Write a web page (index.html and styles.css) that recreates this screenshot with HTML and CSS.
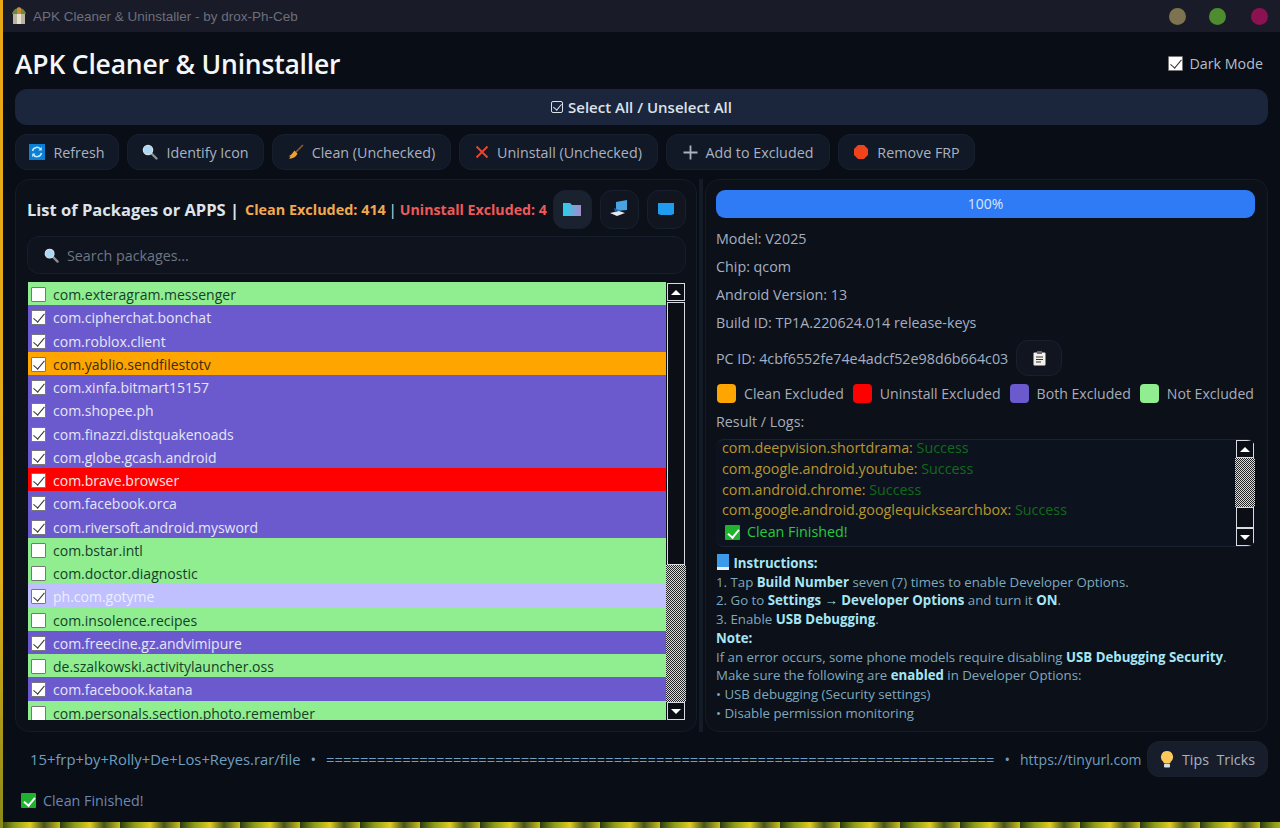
FILE: index.html
```html
<!DOCTYPE html>
<html lang="en">

<head>
    <meta charset="UTF-8">
    <title>APK Cleaner &amp; Uninstaller</title>
    <link rel="stylesheet" href="styles.css">
</head>

<body>
    <div class="window">
        <div class="titlebar">
            <svg class="app-icon" width="16" height="18" viewBox="0 0 16 18">
                <path d="M2 7h12v10H2z" fill="#b9b3a0" />
                <path d="M6 7h4v10H6z" fill="#e6e2d2" />
                <path d="M1 7c1-4 4-6 7-6s6 2 7 6z" fill="#6d8a3c" />
                <path d="M6 1l2-1 2 1v6H6z" fill="#c98a3a" />
            </svg>
            <span class="title-text">APK Cleaner &amp; Uninstaller - by drox-Ph-Ceb</span>
            <div class="dots">
                <span class="dot dot-yellow"></span>
                <span class="dot dot-green"></span>
                <span class="dot dot-red"></span>
            </div>
        </div>

        <div class="content">
            <div class="header">
                <h1>APK Cleaner &amp; Uninstaller</h1>
                <label class="dark-toggle"><span class="check check-on"></span>Dark Mode</label>
            </div>

            <div class="select-all"><span class="mini-box"></span>Select All / Unselect All</div>

            <div class="toolbar">
                <button class="btn btn-refresh">
                    <svg width="16" height="16" viewBox="0 0 16 16">
                        <rect width="16" height="16" fill="#0b7fd6" />
                        <path d="M3.5 7a4.6 4.6 0 0 1 8.4-1.5M12.5 9a4.6 4.6 0 0 1-8.4 1.5" fill="none" stroke="#bfe6ff" stroke-width="1.6" />
                        <path d="M12.8 2.8v3.6H9.4zM3.2 13.2V9.600h3.400z" fill="#bfe6ff" />
                    </svg>
                    Refresh
                </button>
                <button class="btn btn-identify">
                    <svg width="16" height="16" viewBox="0 0 16 16">
                        <path d="M9.500 9.500l5 5" stroke="#8a8f98" stroke-width="2.400" stroke-linecap="round" />
                        <circle cx="6" cy="6" r="4.600" fill="#a9d8f5" stroke="#d5dde4" stroke-width="1.400" />
                    </svg>
                    Identify Icon
                </button>
                <button class="btn btn-clean">
                    <svg width="16" height="16" viewBox="0 0 16 16">
                        <path d="M15 1L8 8" stroke="#8a5a32" stroke-width="1.600" />
                        <path d="M6.500 6.500l3 3c-1 3-4 5-8.500 5.500 1-1 .5-1 1.500-3-1 .5-1.500.5-2 .5 2-1 4-3 6-6z" fill="#f0a030" />
                    </svg>
                    Clean (Unchecked)
                </button>
                <button class="btn btn-uninstall">
                    <svg width="14" height="14" viewBox="0 0 14 14">
                        <path d="M1.500 1.500l11 11M12.500 1.500l-11 11" stroke="#e8452c" stroke-width="2" />
                    </svg>
                    Uninstall (Unchecked)
                </button>
                <button class="btn btn-add">
                    <svg width="15" height="15" viewBox="0 0 15 15">
                        <path d="M7.500 .5v14M.5 7.500h14" stroke="#aab2bf" stroke-width="1.800" />
                    </svg>
                    Add to Excluded
                </button>
                <button class="btn btn-frp">
                    <svg width="16" height="16" viewBox="0 0 16 16">
                        <path d="M5 1h6l4 4v6l-4 4H5l-4-4V5z" fill="#f0431c" />
                    </svg>
                    Remove FRP
                </button>
            </div>

            <div class="panels">
                <section class="panel panel-left">
                    <div class="list-head">
                        <h2>List of Packages or APPS |</h2>
                        <span class="count-clean">Clean Excluded: 414</span>
                        <span class="count-sep">|</span>
                        <span class="count-uninstall">Uninstall Excluded: 4</span>
                        <div class="view-btns">
                            <button class="icon-btn icon-btn-active">
                                <svg width="20" height="16" viewBox="0 0 20 16">
                                    <defs>
                                        <linearGradient id="folderFill" x1="0" x2="1" y1="0" y2="0">
                                            <stop offset="0" stop-color="#22d3ee" />
                                            <stop offset="1" stop-color="#a78bca" />
                                        </linearGradient>
                                    </defs>
                                    <path d="M1 2h7l2 2h9v11H1z" fill="url(#folderFill)" />
                                </svg>
                            </button>
                            <button class="icon-btn">
                                <svg width="20" height="18" viewBox="0 0 20 18">
                                    <path d="M7 2l11-2v10L7 11z" fill="#4aa3e0" />
                                    <path d="M1 13l9-2 6 2-8 3z" fill="#e6e8ec" />
                                    <path d="M5 8l5 2-4 2z" fill="#2563a8" />
                                </svg>
                            </button>
                            <button class="icon-btn">
                                <svg width="18" height="14" viewBox="0 0 18 14">
                                    <path d="M1 1h16v11l-3 1H4l-3-1z" fill="#1f9cf0" />
                                </svg>
                            </button>
                        </div>
                    </div>

                    <div class="search">
                        <svg width="15" height="15" viewBox="0 0 16 16">
                            <path d="M9.500 9.500l5 5" stroke="#8a8f98" stroke-width="2.400" stroke-linecap="round" />
                            <circle cx="6" cy="6" r="4.600" fill="#a9d8f5" stroke="#d5dde4" stroke-width="1.400" />
                        </svg>
                        <span>Search packages...</span>
                    </div>

                    <div class="pkg-box">
                        <div class="pkg-list">
                            <div class="row row-green"><span class="check"></span>com.exteragram.messenger</div>
                            <div class="row row-purple"><span class="check check-on"></span>com.cipherchat.bonchat</div>
                            <div class="row row-purple"><span class="check check-on"></span>com.roblox.client</div>
                            <div class="row row-orange"><span class="check check-on"></span>com.yablio.sendfilestotv</div>
                            <div class="row row-purple"><span class="check check-on"></span>com.xinfa.bitmart15157</div>
                            <div class="row row-purple"><span class="check check-on"></span>com.shopee.ph</div>
                            <div class="row row-purple"><span class="check check-on"></span>com.finazzi.distquakenoads</div>
                            <div class="row row-purple"><span class="check check-on"></span>com.globe.gcash.android</div>
                            <div class="row row-red"><span class="check check-on"></span>com.brave.browser</div>
                            <div class="row row-purple"><span class="check check-on"></span>com.facebook.orca</div>
                            <div class="row row-purple"><span class="check check-on"></span>com.riversoft.android.mysword</div>
                            <div class="row row-green"><span class="check"></span>com.bstar.intl</div>
                            <div class="row row-green"><span class="check"></span>com.doctor.diagnostic</div>
                            <div class="row row-lilac"><span class="check check-on"></span>ph.com.gotyme</div>
                            <div class="row row-green"><span class="check"></span>com.insolence.recipes</div>
                            <div class="row row-purple"><span class="check check-on"></span>com.freecine.gz.andvimipure</div>
                            <div class="row row-green"><span class="check"></span>de.szalkowski.activitylauncher.oss</div>
                            <div class="row row-purple"><span class="check check-on"></span>com.facebook.katana</div>
                            <div class="row row-green"><span class="check"></span>com.personals.section.photo.remember</div>
                        </div>
                        <div class="scrollbar">
                            <div class="sb-btn"><span class="arrow-up"></span></div>
                            <div class="sb-thumb thumb-list"></div>
                            <div class="sb-track"></div>
                            <div class="sb-btn"><span class="arrow-down"></span></div>
                        </div>
                    </div>
                </section>

                <div class="splitter"></div>

                <section class="panel panel-right">
                    <div class="progress">100%</div>
                    <div class="info">Model: V2025</div>
                    <div class="info">Chip: qcom</div>
                    <div class="info">Android Version: 13</div>
                    <div class="info">Build ID: TP1A.220624.014 release-keys</div>
                    <div class="pc-row">
                        <span>PC ID: 4cbf6552fe74e4adcf52e98d6b664c03</span>
                        <button class="copy-btn">
                            <svg width="13" height="15" viewBox="0 0 13 15">
                                <rect x=".5" y="1.500" width="12" height="13" rx="1" fill="#f2f0e8" />
                                <rect x="4" y="0" width="5" height="3" fill="#6b6b6b" />
                                <path d="M3 6h7M3 8.500h7M3 11h5" stroke="#333" stroke-width="1.100" />
                            </svg>
                        </button>
                    </div>
                    <div class="legend">
                        <span class="swatch swatch-orange"></span><span class="legend-text">Clean Excluded</span>
                        <span class="swatch swatch-red"></span><span class="legend-text">Uninstall Excluded</span>
                        <span class="swatch swatch-purple"></span><span class="legend-text">Both Excluded</span>
                        <span class="swatch swatch-green"></span><span class="legend-text">Not Excluded</span>
                    </div>
                    <div class="logs-label">Result / Logs:</div>
                    <div class="logs">
                        <div class="log-lines">
                            <div><span class="pkg">com.deepvision.shortdrama:</span> <span class="ok">Success</span></div>
                            <div><span class="pkg">com.google.android.youtube:</span> <span class="ok">Success</span></div>
                            <div><span class="pkg">com.android.chrome:</span> <span class="ok">Success</span></div>
                            <div><span class="pkg">com.google.android.googlequicksearchbox:</span> <span class="ok">Success</span></div>
                            <div class="log-done"><span class="green-tick"></span>Clean Finished!</div>
                        </div>
                        <div class="scrollbar scrollbar-logs">
                            <div class="sb-btn"><span class="arrow-up"></span></div>
                            <div class="sb-track track-logs"></div>
                            <div class="sb-thumb thumb-logs"></div>
                            <div class="sb-btn"><span class="arrow-down"></span></div>
                        </div>
                    </div>
                    <div class="instructions">
                        <div><svg class="book" width="14" height="16" viewBox="0 0 14 16">
                                <rect x="1" y="0" width="12" height="13" fill="#3b9be8" />
                                <rect x="1" y="13" width="12" height="3" fill="#e8f0f8" />
                            </svg> <b>Instructions:</b></div>
                        <div>1. Tap <b>Build Number</b> seven (7) times to enable Developer Options.</div>
                        <div>2. Go to <b>Settings → Developer Options</b> and turn it <b>ON</b>.</div>
                        <div>3. Enable <b>USB Debugging</b>.</div>
                        <div><b>Note:</b></div>
                        <div>If an error occurs, some phone models require disabling <b>USB Debugging Security</b>.</div>
                        <div>Make sure the following are <b>enabled</b> in Developer Options:</div>
                        <div>• USB debugging (Security settings)</div>
                        <div>• Disable permission monitoring</div>
                    </div>
                </section>
            </div>

            <div class="footer">
                <div class="marquee">15+frp+by+Rolly+De+Los+Reyes.rar/file<span class="marquee-sep">•</span>===============================================================================<span class="marquee-sep">•</span><span class="marquee-link">https://tinyurl.com</span></div>
                <button class="btn btn-tips">
                    <svg width="14" height="17" viewBox="0 0 14 17">
                        <path d="M7 0a6 6 0 0 1 3.500 10.900V12h-7v-1.100A6 6 0 0 1 7 0z" fill="#fcc95a" />
                        <rect x="4" y="12.500" width="6" height="4" rx="1" fill="#d8dde2" />
                    </svg>
                    Tips&nbsp; Tricks
                </button>
            </div>

            <div class="status"><span class="green-tick"></span>Clean Finished!</div>
        </div>
    </div>
</body>

</html>
```
FILE: styles.css
```css
* {
    box-sizing: border-box;
}

body {
    margin: 0;
    width: 1280px;
    height: 828px;
    overflow: hidden;
    font-family: "Open Sans", "Noto Sans", sans-serif;
    background-color: #d8b818;
    background-image:
        linear-gradient(#e8a814, #e0b018 70%, #8a8a18),
        repeating-linear-gradient(90deg, #2c3a10 0, #8a9a18 14px, #e0cc20 30px, #46541a 44px, #c8c020 60px);
    background-size: 3px 100%, 100% 100%;
    background-repeat: no-repeat;
}

button {
    font-family: inherit;
}

.window {
    margin-left: 3px;
    height: 822px;
    background-color: #090d15;
    display: flex;
    flex-direction: column;
}

.titlebar {
    height: 32px;
    flex: none;
    background-color: #1a1b29;
    display: flex;
    align-items: center;
    padding-left: 8px;
    color: #6a6f7a;
    font-family: "Liberation Sans", Arial, sans-serif;
    font-size: 13.500px;
}

.app-icon {
    margin-right: 6px;
}

.dots {
    margin-left: auto;
    display: flex;
    gap: 23px;
    padding-right: 12px;
}

.dot {
    width: 17px;
    height: 17px;
    border-radius: 50%;
}

.dot-yellow {
    background-color: #7d7350;
}

.dot-green {
    background-color: #4f8c2f;
    margin-right: 2px;
}

.dot-red {
    background-color: #8a1250;
}

.content {
    flex: 1;
    padding: 0 12px;
    display: flex;
    flex-direction: column;
}

.header {
    height: 57px;
    display: flex;
    align-items: center;
    justify-content: space-between;
    padding-right: 2px;
}

h1 {
    margin: 0;
    color: #f4f6f8;
    font-size: 26.500px;
    font-weight: 600;
    padding-top: 7px;
    letter-spacing: -0.2px;
}

.dark-toggle {
    display: flex;
    align-items: center;
    gap: 6px;
    color: #b6bdc9;
    font-size: 14.300px;
    padding-top: 5px;
    padding-right: 3px;
}

.select-all {
    height: 36px;
    flex: none;
    border-radius: 12px;
    background-color: #1b263d;
    color: #dce2ea;
    font-size: 15px;
    font-weight: 600;
    display: flex;
    align-items: center;
    justify-content: center;
    gap: 5px;
}

.mini-box {
    width: 12px;
    height: 12px;
    border: 1.500px solid #dce2ea;
    border-radius: 2px;
    position: relative;
}

.mini-box::after {
    content: "";
    position: absolute;
    left: 3px;
    top: 0;
    width: 4px;
    height: 7px;
    border-right: 1.500px solid #dce2ea;
    border-bottom: 1.500px solid #dce2ea;
    transform: rotate(40deg);
}

.toolbar {
    display: flex;
    gap: 8px;
    margin-top: 9px;
    flex: none;
}

.btn {
    height: 36px;
    border: 1px solid #182030;
    border-radius: 12px;
    background-color: #111826;
    color: #a9b2c0;
    font-size: 14.300px;
    display: flex;
    align-items: center;
    justify-content: center;
    gap: 8px;
    padding: 0;
}

.btn-refresh {
    width: 104px;
}

.btn-identify {
    width: 137px;
}

.btn-clean {
    width: 179px;
}

.btn-uninstall {
    width: 199px;
}

.btn-add {
    width: 164px;
}

.btn-frp {
    width: 137px;
}

.panels {
    display: grid;
    grid-template-columns: 682px 8px 563px;
    height: 553px;
    margin-top: 9px;
    flex: none;
}

.panel {
    border: 1px solid #141b29;
    border-radius: 14px;
    background-color: #0c1019;
    padding: 10px 10px 10px 11px;
}

.splitter {
    margin: 0 2px;
    background-color: #141a26;
}

.list-head {
    display: flex;
    align-items: center;
    height: 38px;
    font-size: 14.400px;
    font-weight: 700;
    white-space: nowrap;
}

h2 {
    margin: 0 6px 0 0;
    color: #dfe4ea;
    font-size: 16.500px;
    font-weight: 700;
}

.count-clean {
    color: #f0a94e;
}

.count-sep {
    color: #dfe4ea;
    margin: 0 3px;
    font-weight: 400;
}

.count-uninstall {
    color: #ee5a5a;
    font-size: 14.200px;
}

.view-btns {
    margin-left: auto;
    display: flex;
    gap: 7.500px;
}

.icon-btn {
    width: 39.500px;
    height: 39px;
    border: 1px solid #182030;
    border-radius: 12px;
    background-color: #10151f;
    display: flex;
    align-items: center;
    justify-content: center;
    padding: 0;
}

.icon-btn-active {
    background-color: #1a2230;
}

.search {
    height: 38px;
    margin-top: 8px;
    border: 1px solid #161d2b;
    border-radius: 12px;
    background-color: #0e131d;
    display: flex;
    align-items: center;
    gap: 8px;
    padding-left: 16px;
    color: #6e7683;
    font-size: 14.300px;
}

.pkg-box {
    margin-top: 8px;
    height: 438px;
    padding-left: 1px;
    display: flex;
    justify-content: space-between;
}

.pkg-list {
    width: 638px;
    overflow: hidden;
}

.row {
    height: 23.250px;
    display: flex;
    align-items: center;
    gap: 7px;
    padding: 2px 0 0 3px;
    font-size: 14px;
    white-space: nowrap;
}

.row-green {
    background-color: #90ee90;
    color: #16402a;
}

.row-purple {
    background-color: #6a5acd;
    color: #e6e6f6;
}

.row-orange {
    background-color: #ffa500;
    color: #3a2c10;
}

.row-red {
    background-color: #ff0000;
    color: #f8e8e8;
}

.row-lilac {
    background-color: #c0c0ff;
    color: #eeeeff;
}

.check {
    width: 15px;
    height: 15px;
    flex: none;
    background-color: #fff;
    border: 1px solid #777;
    border-radius: 1px;
    display: inline-block;
    position: relative;
}

.check-on::after {
    content: "";
    position: absolute;
    left: 4px;
    top: 0;
    width: 5px;
    height: 10px;
    border-right: 1.500px solid #333;
    border-bottom: 1.500px solid #333;
    transform: rotate(40deg);
}

.scrollbar {
    width: 20px;
    display: flex;
    flex-direction: column;
    align-items: center;
    padding-top: 1px;
}

.sb-btn {
    width: 18px;
    height: 18px;
    flex: none;
    background-color: #0b0e15;
    border: 1px solid #d8dce2;
    display: flex;
    align-items: center;
    justify-content: center;
}

.arrow-up {
    border-left: 5px solid transparent;
    border-right: 5px solid transparent;
    border-bottom: 5px solid #fff;
}

.arrow-down {
    border-left: 5px solid transparent;
    border-right: 5px solid transparent;
    border-top: 5px solid #fff;
}

.sb-thumb {
    width: 18px;
    flex: none;
    background-color: #0b0e15;
    border: 1px solid #d8dce2;
}

.thumb-list {
    height: 263px;
    margin-top: 1px;
}

.thumb-logs {
    height: 21px;
}

.sb-track {
    width: 20px;
    flex: 1;
    background-image: conic-gradient(#222 25%, #ddd 0 50%, #222 0 75%, #ddd 0);
    background-size: 2px 2px;
}

.track-logs {
    flex: 1;
}

.panel-right {
    padding: 10px 12px 0 10px;
    color: #a3afc2;
    font-size: 14.300px;
}

.progress {
    height: 28px;
    margin-bottom: 6px;
    border-radius: 9px;
    background-color: #2f7bf6;
    color: #dbe6fb;
    font-size: 14px;
    text-align: center;
    line-height: 28px;
}

.info {
    height: 28px;
    display: flex;
    align-items: center;
}

.pc-row {
    height: 36px;
    margin-top: 4px;
    display: flex;
    align-items: center;
    gap: 8px;
}

.copy-btn {
    width: 46px;
    height: 36px;
    border: 1px solid #182030;
    border-radius: 12px;
    background-color: #10151f;
    display: flex;
    align-items: center;
    justify-content: center;
    padding: 0;
}

.legend {
    height: 28px;
    margin-top: 3px;
    padding-left: 1px;
    display: flex;
    align-items: center;
    color: #a6adb9;
    font-size: 14.100px;
}

.swatch {
    width: 19px;
    height: 19px;
    flex: none;
    border-radius: 4px;
    margin-right: 8px;
}

.legend-text {
    flex: none;
    margin-right: 9px;
    white-space: nowrap;
}

.legend-text:last-child {
    margin-right: 0;
}

.swatch-orange {
    background-color: #ffa500;
}

.swatch-red {
    background-color: #ff0000;
}

.swatch-purple {
    background-color: #6a5acd;
}

.swatch-green {
    background-color: #90ee90;
}

.logs-label {
    height: 28px;
    display: flex;
    align-items: center;
    color: #a6adb9;
}

.logs {
    height: 108px;
    margin-top: 4px;
    border-top: 1px solid #1a2230;
    border-bottom: 1px solid #1a2230;
    border-radius: 8px;
    background-color: #0d131e;
    display: flex;
    justify-content: space-between;
    overflow: hidden;
    padding-left: 6px;
}

.log-lines {
    margin-top: -2px;
    line-height: 20.800px;
    white-space: nowrap;
}

.pkg {
    color: #b8972e;
}

.ok {
    color: #126a1c;
}

.log-done {
    color: #27c93f;
    display: flex;
    align-items: center;
    gap: 7px;
    padding: 1px 0 0 3px;
}

.green-tick {
    width: 15px;
    height: 15px;
    flex: none;
    background-color: #1eb32e;
    border-radius: 1px;
    position: relative;
}

.green-tick::after {
    content: "";
    position: absolute;
    left: 5px;
    top: 2px;
    width: 5px;
    height: 9px;
    border-right: 2px solid #fff;
    border-bottom: 2px solid #fff;
    transform: rotate(40deg);
}

.scrollbar-logs {
    padding-top: 0;
}

.instructions {
    margin-top: 7px;
    font-size: 13.250px;
    line-height: 18.700px;
    color: #7fa8bc;
    white-space: nowrap;
}

.instructions b {
    color: #a5e6f5;
    font-weight: 700;
}

.book {
    vertical-align: -2px;
}

.footer {
    height: 36px;
    margin-top: 9px;
    display: flex;
    justify-content: space-between;
    align-items: center;
    flex: none;
}

.marquee {
    margin-left: 15px;
    width: 1111px;
    overflow: hidden;
    white-space: nowrap;
    color: #6f9fc0;
    font-size: 14.800px;
}

.marquee-sep {
    margin: 0 10px;
}

.marquee-link {
    font-size: 14px;
}

.btn-tips {
    width: 121px;
    background-color: #171d2b;
    flex: none;
}

.status {
    margin-top: 14px;
    padding-left: 6px;
    display: flex;
    align-items: center;
    gap: 7px;
    color: #6d86b0;
    font-size: 14.300px;
}
```
